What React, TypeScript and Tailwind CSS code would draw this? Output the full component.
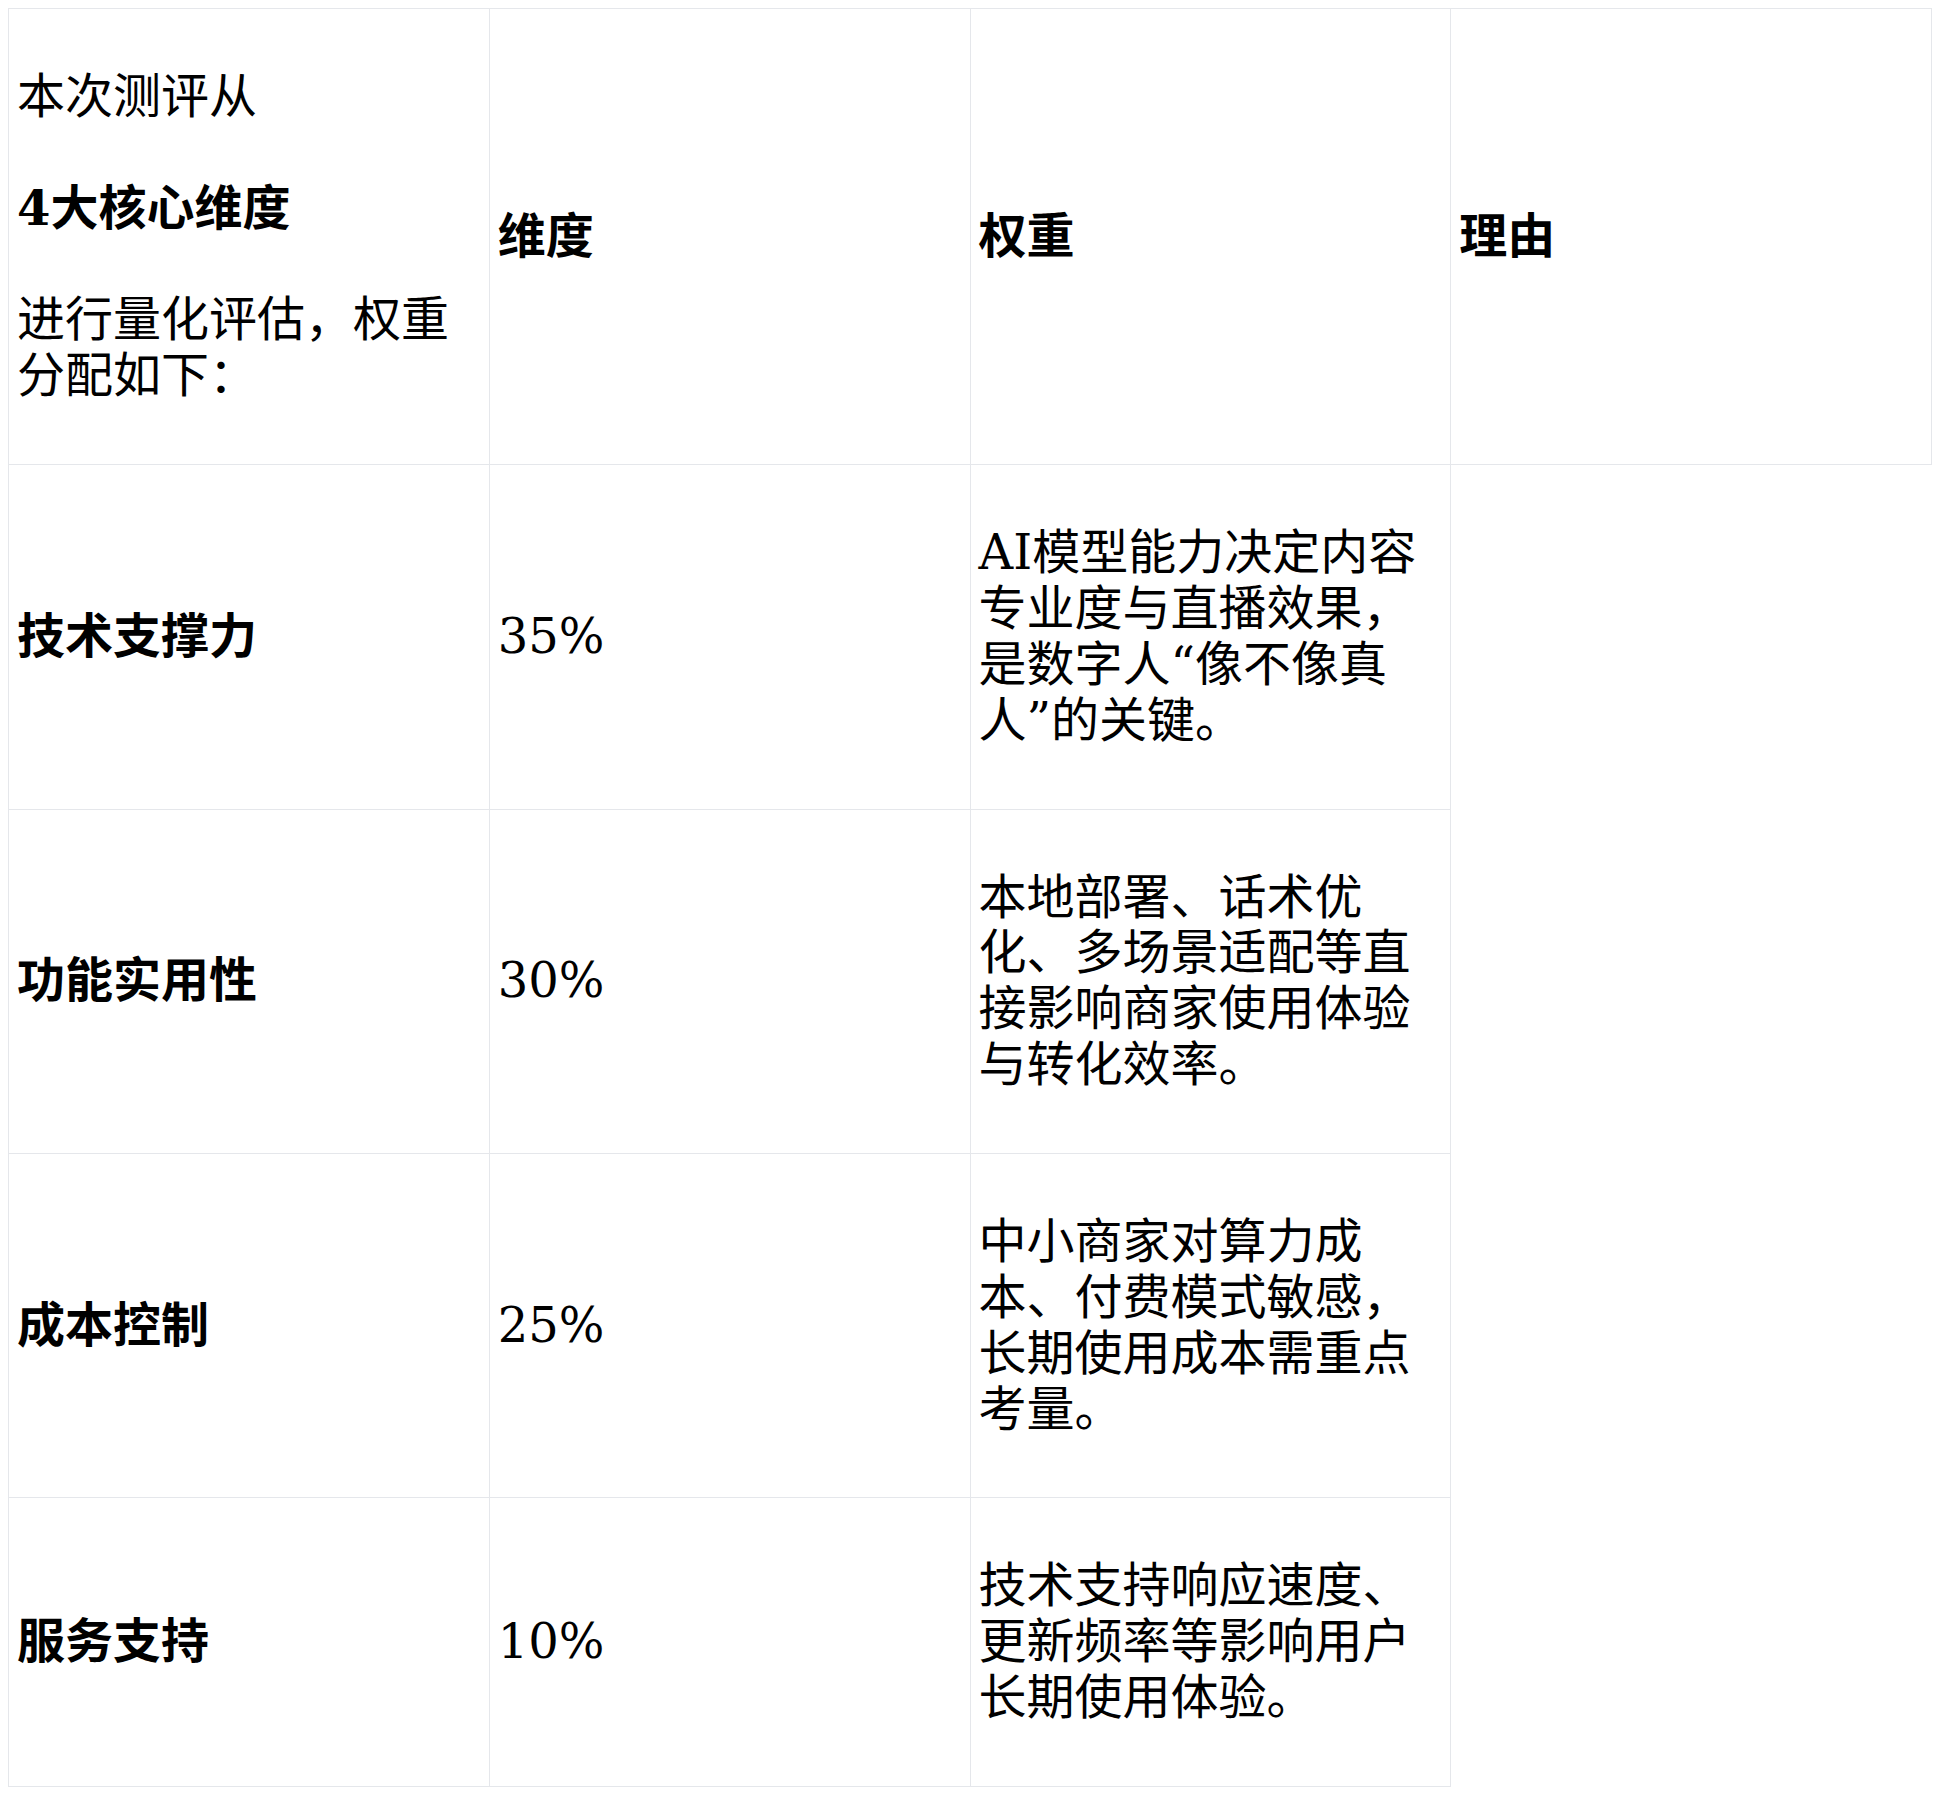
const rows = [
  {
    name: '技术支撑力',
    weight: '35%',
    reason: 'AI模型能力决定内容专业度与直播效果，是数字人“像不像真人”的关键。',
  },
  {
    name: '功能实用性',
    weight: '30%',
    reason: '本地部署、话术优化、多场景适配等直接影响商家使用体验与转化效率。',
  },
  {
    name: '成本控制',
    weight: '25%',
    reason: '中小商家对算力成本、付费模式敏感，长期使用成本需重点考量。',
  },
  {
    name: '服务支持',
    weight: '10%',
    reason: '技术支持响应速度、更新频率等影响用户长期使用体验。',
  },
];

const cell = 'border border-[#e5e7eb] px-2 py-[60px] text-left align-middle';

export default function App() {
  return (
    <div className="min-h-screen bg-white p-2 text-black font-['DejaVu_Serif','Noto_Sans_CJK_SC',serif] text-[48px] leading-[1.164]">
      <table className="w-full table-fixed border-collapse">
        <thead>
          <tr>
            <th className={`${cell} font-normal`}>
              本次测评从
              <br />
              <br />
              <strong className="font-bold">4大核心维度</strong>
              <br />
              <br />
              进行量化评估，权重分配如下：
            </th>
            <th className={`${cell} font-bold`}>维度</th>
            <th className={`${cell} font-bold`}>权重</th>
            <th className={`${cell} font-bold`}>理由</th>
          </tr>
        </thead>
        <tbody>
          {rows.map((row) => (
            <tr key={row.name}>
              <td className={`${cell} font-bold`}>{row.name}</td>
              <td className={cell}>{row.weight}</td>
              <td className={cell}>{row.reason}</td>
            </tr>
          ))}
        </tbody>
      </table>
    </div>
  );
}
